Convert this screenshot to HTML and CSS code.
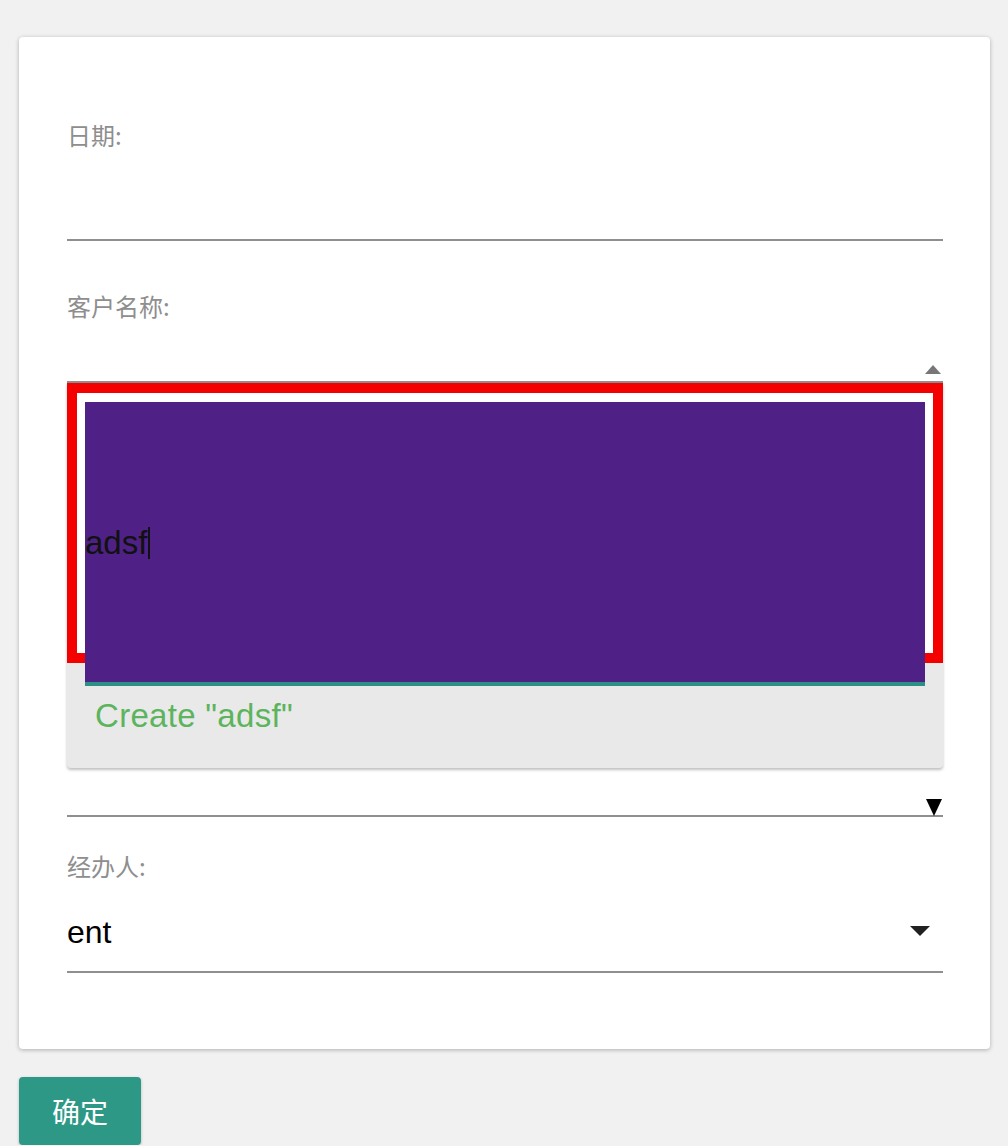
FILE: index.html
```html
<!DOCTYPE html>
<html lang="zh">
<head>
<meta charset="utf-8">
<link rel="stylesheet" href="styles.css">
</head>
<body>
<div class="page">
  <form class="card">
    <div class="field">
      <div class="label">日期:</div>
      <div class="input date-input"></div>
    </div>

    <div class="field field-customer">
      <div class="label">客户名称:</div>
      <div class="input select-top">
        <svg class="tri-up" width="16" height="9" viewBox="0 0 16 9"><polygon points="0,9 16,9 8,0" fill="#777"/></svg>
      </div>
      <div class="menu">
        <div class="red-box">
          <div class="purple-input"><span class="typed">adsf</span><span class="cursor"></span></div>
        </div>
        <div class="option">Create "adsf"</div>
      </div>
      <div class="input select-bottom">
        <svg class="tri-down" width="16" height="17" viewBox="0 0 16 17"><polygon points="0,0 16,0 8,17" fill="#000"/></svg>
      </div>
    </div>

    <div class="field field-agent">
      <div class="label">经办人:</div>
      <div class="input agent-input">
        <span class="value">ent</span>
        <svg class="caret" width="20" height="10" viewBox="0 0 20 10"><polygon points="0,0 20,0 10,10" fill="#212121"/></svg>
      </div>
    </div>
  </form>
  <button class="submit" type="button">确定</button>
</div>
</body>
</html>
```

FILE: styles.css
```css
html, body {
  margin: 0;
  padding: 0;
  background: #f1f1f1;
}

.page {
  padding: 37px 18px 0 19px;
  font-family: "Liberation Sans", "Noto Sans CJK SC", sans-serif;
}

.card {
  display: block;
  background: #fff;
  border-radius: 4px;
  box-shadow: 0 1px 4px rgba(0, 0, 0, 0.28);
  padding: 81px 47px 76px 48px;
}

.label {
  font-family: "Noto Sans CJK SC", sans-serif;
  font-size: 24px;
  line-height: 34px;
  color: #8e8e8e;
}

.input {
  border-bottom: 2px solid #8f8f8f;
}

.date-input {
  height: 87px;
}

.field-customer {
  margin-top: 48px;
}

.select-top {
  height: 58px;
  display: flex;
  justify-content: flex-end;
  align-items: flex-end;
}

.tri-up {
  display: block;
  margin: 0 2px 7px 0;
}

.menu {
  background: #e9e9e9;
  border-radius: 0 0 4px 4px;
  box-shadow: 0 2px 3px rgba(0, 0, 0, 0.25);
}

.red-box {
  box-sizing: border-box;
  height: 280px;
  border: 10px solid #f50000;
  background: #fff;
  padding: 9px 8px;
}

.purple-input {
  box-sizing: border-box;
  height: 284px;
  padding-top: 2px;
  background: #4f2186;
  border-bottom: 4px solid #2a9184;
  display: flex;
  align-items: center;
  font-size: 33px;
  color: #111;
}

.cursor {
  display: inline-block;
  width: 2px;
  height: 32px;
  background: #111;
  margin-left: 1px;
}

.option {
  padding: 33px 28px 32px;
  font-size: 33px;
  line-height: 40px;
  letter-spacing: 0.3px;
  color: #5cb45d;
}

.select-bottom {
  height: 47px;
  display: flex;
  justify-content: flex-end;
  align-items: flex-end;
}

.tri-down {
  display: block;
  margin: 0 1px -1px 0;
}

.field-agent {
  margin-top: 32px;
}

.agent-input {
  height: 88px;
  display: flex;
  align-items: center;
  justify-content: space-between;
}

.value {
  font-size: 32px;
  color: #000;
  margin-top: 10px;
}

.caret {
  display: block;
  margin: 8px 13px 0 0;
}

.submit {
  margin-top: 28px;
  border: none;
  border-radius: 4px;
  background: #2e9886;
  color: #fff;
  font-family: "Noto Sans CJK SC", sans-serif;
  font-size: 28px;
  line-height: 40px;
  padding: 14px 33px;
  box-shadow: 0 1px 3px rgba(0, 0, 0, 0.25);
}
```
